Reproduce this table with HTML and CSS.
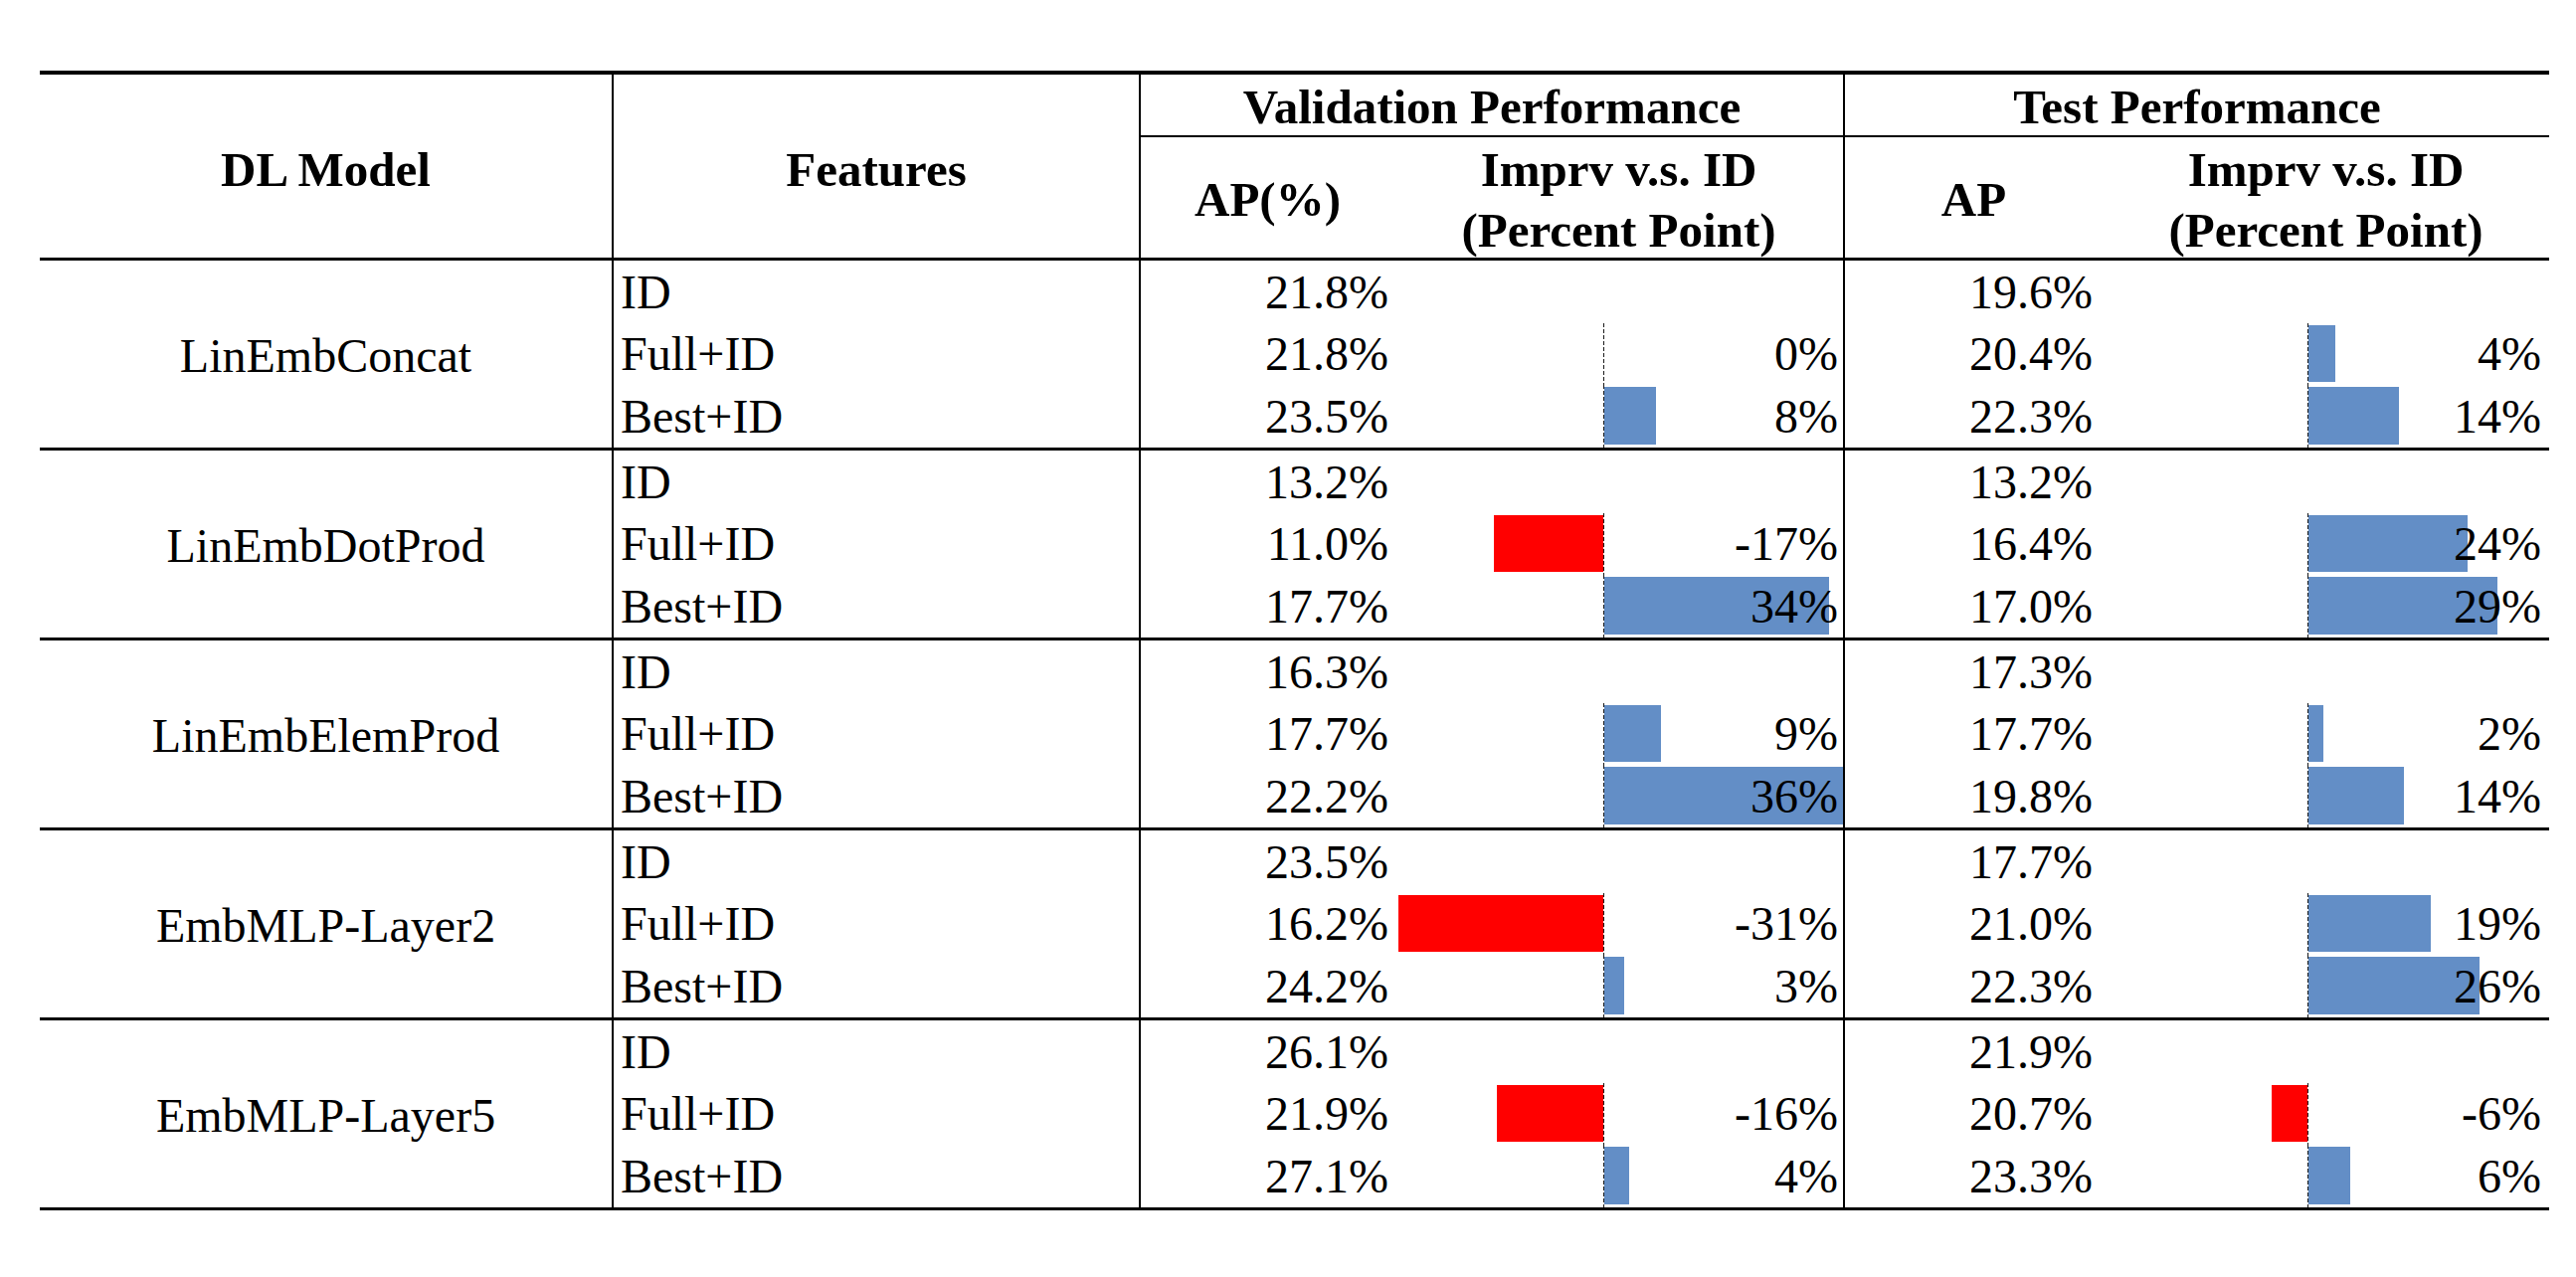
FILE: index.html
```html
<!DOCTYPE html>
<html lang="en">
<head>
<meta charset="utf-8">
<title>DL Model Performance</title>
<link rel="stylesheet" href="styles.css">
</head>
<body>
<div class="sheet">
  <div class="head">
    <div class="h-model">DL Model</div>
    <div class="h-feat bl">Features</div>
    <div class="h-val bl">Validation Performance</div>
    <div class="h-test bl">Test Performance</div>
    <div class="h-ap h-ap-v bl">AP(%)</div>
    <div class="h-imp h-imp-v">Imprv v.s. ID<br>(Percent Point)</div>
    <div class="h-ap h-ap-t bl">AP</div>
    <div class="h-imp h-imp-t">Imprv v.s. ID<br>(Percent Point)</div>
  </div>

  <div class="group">
    <div class="model">LinEmbConcat</div>
    <div class="feat bl">ID</div><div class="ap v bl">21.8%</div><div class="imp v"></div><div class="ap t bl">19.6%</div><div class="imp t"></div>
    <div class="feat bl">Full+ID</div><div class="ap v bl">21.8%</div>
    <div class="imp v"><div class="chart"><div class="neg"></div><div class="axis"></div><div class="pos"></div></div><span class="num">0%</span></div>
    <div class="ap t bl">20.4%</div>
    <div class="imp t"><div class="chart"><div class="neg"></div><div class="axis"></div><div class="pos"><span class="bar up" style="width:27px"></span></div></div><span class="num">4%</span></div>
    <div class="feat bl">Best+ID</div><div class="ap v bl">23.5%</div>
    <div class="imp v"><div class="chart"><div class="neg"></div><div class="axis"></div><div class="pos"><span class="bar up" style="width:52px"></span></div></div><span class="num">8%</span></div>
    <div class="ap t bl">22.3%</div>
    <div class="imp t"><div class="chart"><div class="neg"></div><div class="axis"></div><div class="pos"><span class="bar up" style="width:91px"></span></div></div><span class="num">14%</span></div>
  </div>

  <div class="group">
    <div class="model">LinEmbDotProd</div>
    <div class="feat bl">ID</div><div class="ap v bl">13.2%</div><div class="imp v"></div><div class="ap t bl">13.2%</div><div class="imp t"></div>
    <div class="feat bl">Full+ID</div><div class="ap v bl">11.0%</div>
    <div class="imp v"><div class="chart"><div class="neg"><span class="bar down" style="width:110px"></span></div><div class="axis"></div><div class="pos"></div></div><span class="num">-17%</span></div>
    <div class="ap t bl">16.4%</div>
    <div class="imp t"><div class="chart"><div class="neg"></div><div class="axis"></div><div class="pos"><span class="bar up" style="width:160px"></span></div></div><span class="num">24%</span></div>
    <div class="feat bl">Best+ID</div><div class="ap v bl">17.7%</div>
    <div class="imp v"><div class="chart"><div class="neg"></div><div class="axis"></div><div class="pos"><span class="bar up" style="width:226px"></span></div></div><span class="num">34%</span></div>
    <div class="ap t bl">17.0%</div>
    <div class="imp t"><div class="chart"><div class="neg"></div><div class="axis"></div><div class="pos"><span class="bar up" style="width:190px"></span></div></div><span class="num">29%</span></div>
  </div>

  <div class="group">
    <div class="model">LinEmbElemProd</div>
    <div class="feat bl">ID</div><div class="ap v bl">16.3%</div><div class="imp v"></div><div class="ap t bl">17.3%</div><div class="imp t"></div>
    <div class="feat bl">Full+ID</div><div class="ap v bl">17.7%</div>
    <div class="imp v"><div class="chart"><div class="neg"></div><div class="axis"></div><div class="pos"><span class="bar up" style="width:57px"></span></div></div><span class="num">9%</span></div>
    <div class="ap t bl">17.7%</div>
    <div class="imp t"><div class="chart"><div class="neg"></div><div class="axis"></div><div class="pos"><span class="bar up" style="width:15px"></span></div></div><span class="num">2%</span></div>
    <div class="feat bl">Best+ID</div><div class="ap v bl">22.2%</div>
    <div class="imp v"><div class="chart"><div class="neg"></div><div class="axis"></div><div class="pos"><span class="bar up" style="width:240px"></span></div></div><span class="num">36%</span></div>
    <div class="ap t bl">19.8%</div>
    <div class="imp t"><div class="chart"><div class="neg"></div><div class="axis"></div><div class="pos"><span class="bar up" style="width:96px"></span></div></div><span class="num">14%</span></div>
  </div>

  <div class="group">
    <div class="model">EmbMLP-Layer2</div>
    <div class="feat bl">ID</div><div class="ap v bl">23.5%</div><div class="imp v"></div><div class="ap t bl">17.7%</div><div class="imp t"></div>
    <div class="feat bl">Full+ID</div><div class="ap v bl">16.2%</div>
    <div class="imp v"><div class="chart"><div class="neg"><span class="bar down" style="width:206px"></span></div><div class="axis"></div><div class="pos"></div></div><span class="num">-31%</span></div>
    <div class="ap t bl">21.0%</div>
    <div class="imp t"><div class="chart"><div class="neg"></div><div class="axis"></div><div class="pos"><span class="bar up" style="width:123px"></span></div></div><span class="num">19%</span></div>
    <div class="feat bl">Best+ID</div><div class="ap v bl">24.2%</div>
    <div class="imp v"><div class="chart"><div class="neg"></div><div class="axis"></div><div class="pos"><span class="bar up" style="width:20px"></span></div></div><span class="num">3%</span></div>
    <div class="ap t bl">22.3%</div>
    <div class="imp t"><div class="chart"><div class="neg"></div><div class="axis"></div><div class="pos"><span class="bar up" style="width:172px"></span></div></div><span class="num">26%</span></div>
  </div>

  <div class="group">
    <div class="model">EmbMLP-Layer5</div>
    <div class="feat bl">ID</div><div class="ap v bl">26.1%</div><div class="imp v"></div><div class="ap t bl">21.9%</div><div class="imp t"></div>
    <div class="feat bl">Full+ID</div><div class="ap v bl">21.9%</div>
    <div class="imp v"><div class="chart"><div class="neg"><span class="bar down" style="width:107px"></span></div><div class="axis"></div><div class="pos"></div></div><span class="num">-16%</span></div>
    <div class="ap t bl">20.7%</div>
    <div class="imp t"><div class="chart"><div class="neg"><span class="bar down" style="width:36px"></span></div><div class="axis"></div><div class="pos"></div></div><span class="num">-6%</span></div>
    <div class="feat bl">Best+ID</div><div class="ap v bl">27.1%</div>
    <div class="imp v"><div class="chart"><div class="neg"></div><div class="axis"></div><div class="pos"><span class="bar up" style="width:25px"></span></div></div><span class="num">4%</span></div>
    <div class="ap t bl">23.3%</div>
    <div class="imp t"><div class="chart"><div class="neg"></div><div class="axis"></div><div class="pos"><span class="bar up" style="width:42px"></span></div></div><span class="num">6%</span></div>
  </div>
</div>
</body>
</html>
```
FILE: styles.css
```css
* { box-sizing: border-box; }

html, body {
  margin: 0;
  padding: 0;
  background: #ffffff;
}

body {
  font-family: "Liberation Serif", "Times New Roman", serif;
  font-size: 48px;
  line-height: 54px;
  color: #000000;
}

.sheet {
  margin: 71px 0 0 40px;
  width: 2523px;
  border-top: 4px solid #000;
}

.head,
.group {
  display: grid;
  grid-template-columns: 575px 530px 257px 451px 261px 449px;
}

.head {
  grid-template-rows: 63px 121px;
  border-bottom: 3px solid #000;
  font-weight: bold;
  font-size: 49px;
}

.bl { border-left: 2px solid #000; }

.h-model,
.h-feat {
  grid-row: 1 / 3;
  display: flex;
  align-items: center;
  justify-content: center;
  padding-top: 7px;
  white-space: nowrap;
}
.h-model { grid-column: 1; }
.h-feat { grid-column: 2; }

.h-val,
.h-test {
  grid-row: 1;
  display: flex;
  align-items: center;
  justify-content: center;
  border-bottom: 2px solid #000;
  padding-top: 4px;
  white-space: nowrap;
}
.h-val { grid-column: 3 / 5; }
.h-test { grid-column: 5 / 7; }

.h-ap {
  grid-row: 2;
  display: flex;
  align-items: center;
  justify-content: center;
  padding-top: 4px;
}
.h-ap-v { grid-column: 3; }
.h-ap-t { grid-column: 5; }

.h-imp {
  grid-row: 2;
  display: flex;
  align-items: center;
  justify-content: center;
  text-align: center;
  line-height: 61px;
  padding-top: 5px;
  white-space: nowrap;
}
.h-imp-v { grid-column: 4; }
.h-imp-t { grid-column: 6; }

.group {
  grid-template-rows: repeat(3, 1fr);
  height: 191px;
  border-bottom: 3px solid #000;
}

.model {
  grid-row: 1 / 4;
  grid-column: 1;
  display: flex;
  align-items: center;
  justify-content: center;
  padding-top: 4px;
  white-space: nowrap;
}

.feat {
  display: flex;
  align-items: center;
  padding-left: 7px;
  padding-top: 1px;
  white-space: nowrap;
}

.ap {
  display: flex;
  align-items: center;
  justify-content: flex-end;
  padding-top: 1px;
  white-space: nowrap;
}
.ap.v { padding-right: 6px; }
.ap.t { padding-right: 10px; }

.imp {
  display: grid;
  grid-template-columns: 1fr;
  grid-template-rows: 1fr;
  min-height: 0;
}

.chart {
  grid-area: 1 / 1;
  display: flex;
  align-items: stretch;
  min-height: 0;
}

.neg {
  display: flex;
  justify-content: flex-end;
  padding: 2px 0 3px;
}
.imp.v .neg { width: 210px; }
.imp.t .neg { width: 206px; }

.axis {
  width: 1px;
  flex: none;
  background: repeating-linear-gradient(to bottom, #1a1a1a 0 4px, transparent 4px 6px);
}

.pos {
  flex: 1;
  display: flex;
  padding: 2px 0 3px;
}

.bar {
  display: block;
  height: 100%;
  flex: none;
}
.bar.up { background: #638ec6; }
.bar.down { background: #ff0000; }

.num {
  grid-area: 1 / 1;
  justify-self: end;
  align-self: center;
  padding-top: 1px;
  white-space: nowrap;
  position: relative;
}
.imp.v .num { padding-right: 5px; }
.imp.t .num { padding-right: 8px; }
```
